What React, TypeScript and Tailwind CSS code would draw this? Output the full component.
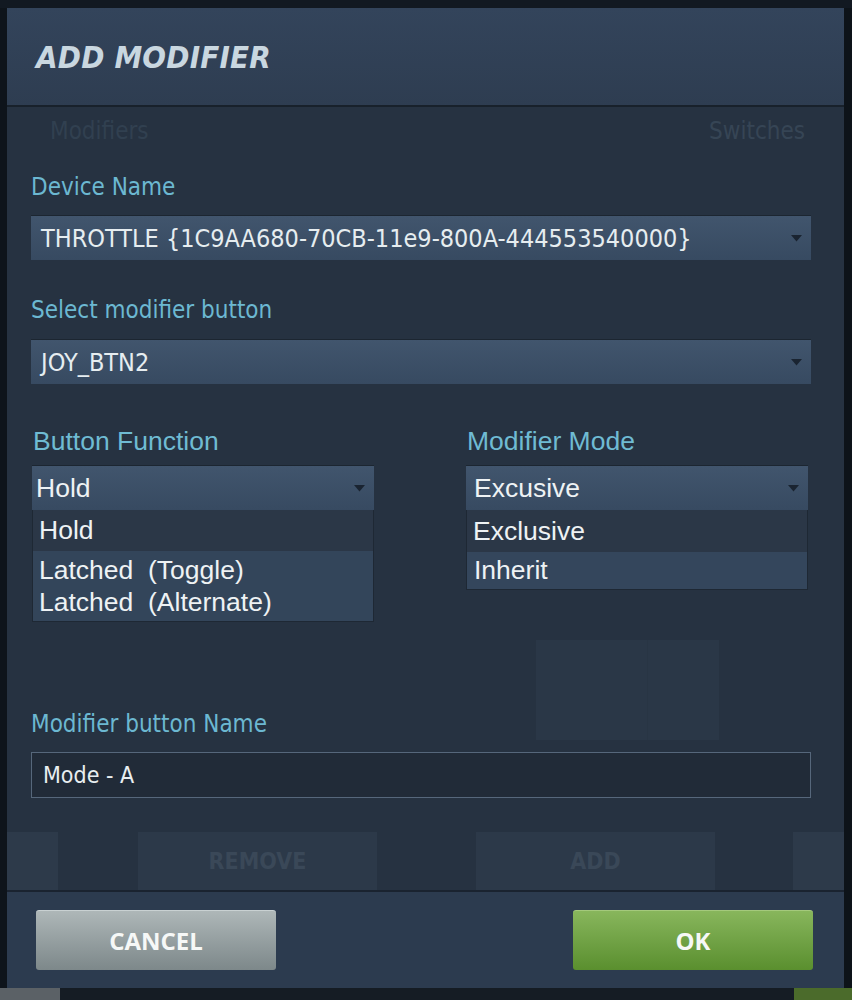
import React from 'react';

const dv = "font-['DejaVu_Sans_Condensed','DejaVu_Sans',sans-serif]";
const ar = "font-['Liberation_Sans',Arial,sans-serif]";

function Caret() {
  return (
    <svg width="11" height="7" viewBox="0 0 11 7" className="shrink-0">
      <polygon points="0,0 11,0 5.5,6.5" fill="#1a2431" />
    </svg>
  );
}

function Select({ value, wide, right }: { value: string; wide?: boolean; right?: boolean }) {
  return (
    <div className="flex items-center justify-between h-[45px] bg-linear-to-b from-[#41556d] to-[#374a61] border-t border-[#1c2631] pr-[9px]">
      {wide ? (
        <span className={`${dv} text-[25px] text-[#e6edf0] pl-[10px] leading-none`}>{value}</span>
      ) : (
        <span className={`${ar} text-[26.5px] text-[#eef2f4] ${right ? 'pl-[8px]' : 'pl-[4px]'} leading-none`}>{value}</span>
      )}
      <Caret />
    </div>
  );
}

export default function App() {
  return (
    <div className="w-[852px] h-[1000px] bg-[#111820] flex flex-col overflow-hidden">
      <div className="h-[8px] shrink-0 bg-[#121922]" />
      <div className="flex shrink-0">
        <div className="w-[7px] bg-[#0e141b]" />
        <div className="w-[837px] h-[980px] flex flex-col bg-[#263241]">
          {/* header */}
          <div className="h-[97px] shrink-0 bg-linear-to-b from-[#33445b] to-[#2e3d51] flex items-center pl-[29px] pt-[2px]">
            <h1 className={`${dv} text-[31px] font-bold italic text-[#c9d7e0] tracking-[0.2px]`}>ADD MODIFIER</h1>
          </div>
          <div className="h-[2px] shrink-0 bg-[#18212b]" />

          {/* body */}
          <div className="flex-1 relative flex flex-col pl-[24px] pr-[33px]">
            {/* ghosted content under the dialog */}
            <div className="absolute left-[529px] top-[533px] w-[183px] h-[100px] bg-[#2a3747] flex">
              <div className="w-[112px] border-r border-[#283544]" />
            </div>

            <div className={`${dv} h-[48px] flex items-center justify-between text-[24px] text-[#314050] pl-[19px] pr-[6px]`}>
              <span>Modifiers</span>
              <span className="text-[#364555]">Switches</span>
            </div>

            <div className={`${dv} relative mt-[20px] h-[24px] leading-[24px] text-[24px] text-[#6cb8d1]`}>Device Name</div>
            <div className="relative mt-[16px]">
              <Select value="THROTTLE {1C9AA680-70CB-11e9-800A-444553540000}" wide />
            </div>

            <div className={`${dv} relative mt-[38px] h-[24px] leading-[24px] text-[24px] text-[#6cb8d1]`}>Select modifier button</div>
            <div className="relative mt-[17px]">
              <Select value="JOY_BTN2" wide />
            </div>

            <div className="relative mt-[45px] flex gap-[92px] pl-[1px]">
              <div className="w-[342px] flex flex-col">
                <div className={`${ar} h-[24px] leading-[24px] text-[26.5px] text-[#6fbbd3] pl-[1px]`}>Button Function</div>
                <div className="mt-[12px]">
                  <Select value="Hold" />
                </div>
                <div className={`${ar} text-[26.5px] text-[#eef2f4] border border-[#1e2834] border-t-0`}>
                  <div className="h-[41px] bg-[#2b3747] flex items-center pl-[6px] pt-[1px]">Hold</div>
                  <div className="h-[70px] bg-[#33455a] flex flex-col pl-[6px] leading-[32px] pt-[3px] whitespace-pre">
                    <span>Latched  (Toggle)</span>
                    <span>Latched  (Alternate)</span>
                  </div>
                </div>
              </div>
              <div className="w-[342px] flex flex-col">
                <div className={`${ar} h-[24px] leading-[24px] text-[26.5px] text-[#6fbbd3] pl-[1px]`}>Modifier Mode</div>
                <div className="mt-[12px]">
                  <Select value="Excusive" right />
                </div>
                <div className={`${ar} text-[26.5px] text-[#eef2f4] border border-[#1e2834] border-t-0`}>
                  <div className="h-[42px] bg-[#2b3747] flex items-center pl-[6px] pt-[1px]">Exclusive</div>
                  <div className="h-[37px] bg-[#34465c] flex items-center pl-[7px]">Inherit</div>
                </div>
              </div>
            </div>

            <div className={`${dv} relative mt-[90px] h-[24px] leading-[24px] text-[24px] text-[#6cb8d1]`}>Modifier button Name</div>
            <div className="relative mt-[16px] h-[46px] bg-[#212b38] border border-[#56677b] flex items-center pl-[11px]">
              <span className={`${dv} text-[23px] text-[#e8eef0]`}>Mode - A</span>
            </div>

            {/* ghosted button row */}
            <div className="mt-auto h-[58px] -ml-[24px] -mr-[33px] flex items-stretch">
              <div className="w-[51px] bg-[#2d3a4a]" />
              <div className={`${dv} ml-[80px] w-[239px] bg-[#2c3949] flex items-center justify-center text-[23px] font-bold text-[#3a4858]`}>REMOVE</div>
              <div className={`${dv} ml-[99px] w-[239px] bg-[#2c3949] flex items-center justify-center text-[23px] font-bold text-[#3a4858]`}>ADD</div>
              <div className="ml-[78px] flex-1 bg-[#2d3a4a]" />
            </div>
          </div>

          {/* footer */}
          <div className="h-[2px] shrink-0 bg-[#1a2330]" />
          <div className="h-[96px] shrink-0 bg-[#2c3b4f] flex items-start justify-between pl-[29px] pr-[31px] pt-[18px]">
            <button className="w-[240px] h-[60px] rounded-[3px] bg-linear-to-b from-[#aeb7b8] to-[#7d888a] border-t border-[#c9d1d2] font-['Open_Sans',sans-serif] font-bold text-[24px] text-[#f6f8f7]">
              CANCEL
            </button>
            <button className="w-[240px] h-[60px] rounded-[3px] bg-linear-to-b from-[#88b65c] to-[#5a8f2e] border-t border-[#a4c97c] font-['Open_Sans',sans-serif] font-bold text-[24px] text-[#f6f8f7]">
              OK
            </button>
          </div>
        </div>
        <div className="flex-1 bg-[#0d1319]" />
      </div>
      <div className="flex-1 flex">
        <div className="w-[60px] bg-[#5b6166]" />
        <div className="flex-1 bg-[#151c24]" />
        <div className="w-[58px] bg-[#4b6b2b]" />
      </div>
    </div>
  );
}
